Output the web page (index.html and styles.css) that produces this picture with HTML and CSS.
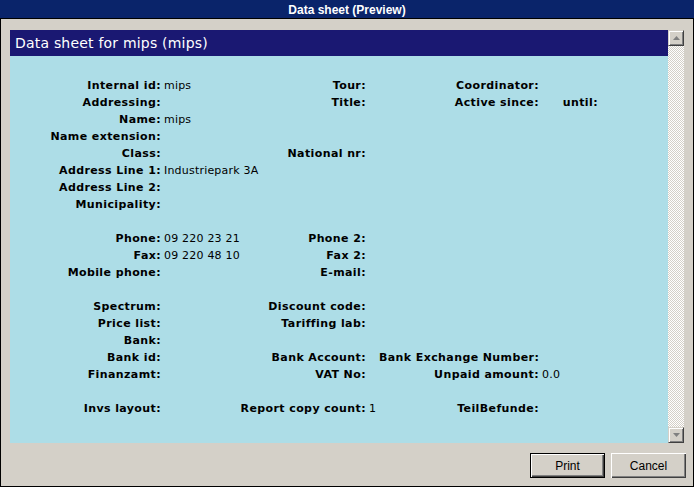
FILE: index.html
```html
<!DOCTYPE html>
<html>
<head>
<meta charset="utf-8">
<title>Data sheet (Preview)</title>
<link rel="stylesheet" href="styles.css">
</head>
<body>
<div class="window">
  <div class="titlebar">Data sheet (Preview)</div>
  <div class="frame">
    <div class="panel">
      <div class="content">
        <div class="header">Data sheet for mips (mips)</div>
        <div class="sheet">
          <div class="row"><span class="lbl">Internal id:</span><span class="val">mips</span><span class="lbl">Tour:</span><span class="val"></span><span class="lbl">Coordinator:</span><span class="val"></span><span class="lbl"></span></div>
          <div class="row"><span class="lbl">Addressing:</span><span class="val"></span><span class="lbl">Title:</span><span class="val"></span><span class="lbl">Active since:</span><span class="val"></span><span class="lbl">until:</span></div>
          <div class="row"><span class="lbl">Name:</span><span class="val">mips</span></div>
          <div class="row"><span class="lbl">Name extension:</span><span class="val"></span></div>
          <div class="row"><span class="lbl">Class:</span><span class="val"></span><span class="lbl">National nr:</span></div>
          <div class="row"><span class="lbl">Address Line 1:</span><span class="val">Industriepark 3A</span></div>
          <div class="row"><span class="lbl">Address Line 2:</span><span class="val"></span></div>
          <div class="row"><span class="lbl">Municipality:</span><span class="val"></span></div>
          <div class="row"></div>
          <div class="row"><span class="lbl">Phone:</span><span class="val">09 220 23 21</span><span class="lbl">Phone 2:</span></div>
          <div class="row"><span class="lbl">Fax:</span><span class="val">09 220 48 10</span><span class="lbl">Fax 2:</span></div>
          <div class="row"><span class="lbl">Mobile phone:</span><span class="val"></span><span class="lbl">E-mail:</span></div>
          <div class="row"></div>
          <div class="row"><span class="lbl">Spectrum:</span><span class="val"></span><span class="lbl">Discount code:</span></div>
          <div class="row"><span class="lbl">Price list:</span><span class="val"></span><span class="lbl">Tariffing lab:</span></div>
          <div class="row"><span class="lbl">Bank:</span><span class="val"></span></div>
          <div class="row"><span class="lbl">Bank id:</span><span class="val"></span><span class="lbl">Bank Account:</span><span class="val"></span><span class="lbl">Bank Exchange Number:</span></div>
          <div class="row"><span class="lbl">Finanzamt:</span><span class="val"></span><span class="lbl">VAT No:</span><span class="val"></span><span class="lbl">Unpaid amount:</span><span class="val">0.0</span></div>
          <div class="row"></div>
          <div class="row"><span class="lbl">Invs layout:</span><span class="val"></span><span class="lbl">Report copy count:</span><span class="val">1</span><span class="lbl">TeilBefunde:</span></div>
        </div>
      </div>
      <div class="scrollbar">
        <div class="sbtn"><svg width="7" height="4" viewBox="0 0 7 4"><polygon points="3.5,0 7,4 0,4" fill="#808080"/></svg></div>
        <div class="track"></div>
        <div class="sbtn"><svg width="7" height="4" viewBox="0 0 7 4"><polygon points="0,0 7,0 3.5,4" fill="#808080"/></svg></div>
      </div>
    </div>
    <div class="buttons">
      <button class="btn default">Print</button>
      <button class="btn">Cancel</button>
    </div>
  </div>
</div>
</body>
</html>
```
FILE: styles.css
```css
html, body {
  margin: 0;
  padding: 0;
}
body {
  width: 694px;
  height: 487px;
  background: #d4d0c8;
  overflow: hidden;
}
.window {
  width: 694px;
  height: 487px;
  display: flex;
  flex-direction: column;
}
.titlebar {
  height: 18px;
  border-bottom: 1px solid #000;
  background: #0a246a;
  color: #fff;
  font: bold 12px "Liberation Sans", Arial, sans-serif;
  line-height: 20px;
  text-align: center;
}
.frame {
  flex: 1;
  border: 1px solid #000;
  border-top: none;
  padding: 11px 9px 0 9px;
  display: flex;
  flex-direction: column;
}
.panel {
  height: 413px;
  display: flex;
}
.content {
  width: 658px;
  display: flex;
  flex-direction: column;
  background: #addde7;
}
.header {
  height: 26px;
  background: #1a1872;
  color: #fff;
  font: 14px "DejaVu Sans", Verdana, sans-serif;
  letter-spacing: 0.2px;
  line-height: 26px;
  padding-left: 5px;
}
.sheet {
  flex: 1;
  padding-top: 21px;
  font-family: "DejaVu Sans", Verdana, sans-serif;
  font-size: 11px;
  line-height: 17px;
  color: #000;
}
.row {
  height: 17px;
  display: grid;
  grid-template-columns: 151px 74px 131px 13px 160px 23px 36px;
}
.lbl {
  font-weight: bold;
  text-align: right;
  white-space: nowrap;
  letter-spacing: 0.4px;
}
.val {
  padding-left: 3px;
  white-space: nowrap;
  letter-spacing: 0.2px;
}
.scrollbar {
  width: 16px;
  display: flex;
  flex-direction: column;
}
.sbtn {
  width: 16px;
  height: 16px;
  box-sizing: border-box;
  background: #d4d0c8;
  border-top: 1px solid #d4d0c8;
  border-left: 1px solid #d4d0c8;
  border-right: 1px solid #404040;
  border-bottom: 1px solid #404040;
  box-shadow: inset 1px 1px #fff, inset -1px -1px #808080;
  display: flex;
  align-items: center;
  justify-content: center;
}
.sbtn svg {
  display: block;
}
.track {
  flex: 1;
  background: repeating-conic-gradient(#ffffff 0 25%, #d4d0c8 0 50%) 0 0 / 2px 2px;
}
.buttons {
  margin-top: 10px;
  margin-right: -2px;
  display: flex;
  justify-content: flex-end;
  gap: 6px;
}
.btn {
  width: 75px;
  height: 25px;
  box-sizing: border-box;
  margin: 0;
  padding: 0;
  background: #d4d0c8;
  color: #000;
  font: 12px "Liberation Sans", Arial, sans-serif;
  border: none;
  border-radius: 0;
  box-shadow: inset 1px 1px #fff, inset -1px -1px #404040, inset -2px -2px #808080;
}
.btn.default {
  border: 1px solid #000;
}
```
